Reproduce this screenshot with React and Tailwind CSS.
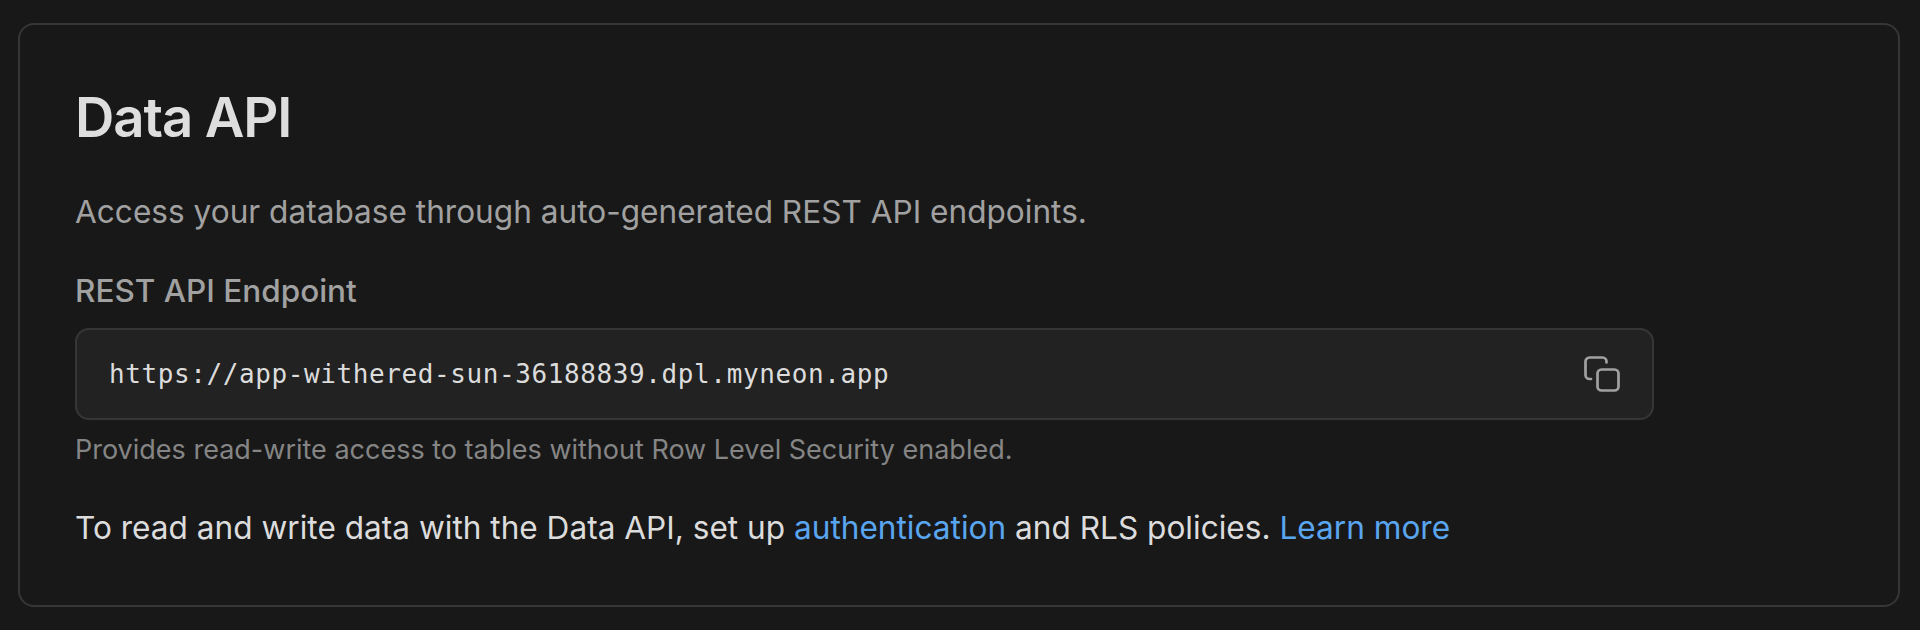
import React from "react";

export default function App() {
  return (
    <div className="h-[630px] w-[1920px] overflow-hidden bg-[#181818] pl-[18px] pr-[20px] pt-[23px] font-['Inter',sans-serif]">
      <div className="h-[584px] rounded-[16px] border-2 border-[#363636] px-[55px] pt-[56px]">
        <h1 className="text-[54.5px] font-semibold leading-[72px] tracking-[-0.02em] text-[#dedede]">Data API</h1>
        <p className="mt-[35px] text-[31.6px] leading-[48px] text-[#a1a1a1]">Access your database through auto-generated REST API endpoints.</p>
        <p className="mt-[33px] text-[31.5px] font-medium leading-[44px] text-[#a1a1a1]">REST API Endpoint</p>
        <div className="mt-[15px] flex h-[92px] w-[1579px] items-center justify-between rounded-[14px] border-2 border-[#363636] bg-[#222222] pl-[32px] pr-[32px]">
          <span className="font-['DejaVu_Sans_Mono',monospace] text-[26px] tracking-[0.6px] text-[#dcdcdc]">https://app-withered-sun-36188839.dpl.myneon.app</span>
          <svg width="36" height="36" viewBox="0 0 36 36" fill="none" stroke="#a1a1a1" strokeWidth="2.7" strokeLinecap="round" strokeLinejoin="round">
            <rect x="13.5" y="13.5" width="21" height="21" rx="4" />
            <path d="M7 23H5.5a4 4 0 0 1-4-4V5.5a4 4 0 0 1 4-4H18.5a4 4 0 0 1 4 4V6.5" />
          </svg>
        </div>
        <p className="mt-[10px] text-[27px] leading-[40px] text-[#858585]">Provides read-write access to tables without Row Level Security enabled.</p>
        <p className="mt-[34px] text-[31.6px] leading-[48px] text-[#dcdcdc]">
          To read and write data with the Data API, set up <span className="text-[#5aa5ef]">authentication</span> and RLS policies. <span className="text-[#5aa5ef]">Learn more</span>
        </p>
      </div>
    </div>
  );
}
